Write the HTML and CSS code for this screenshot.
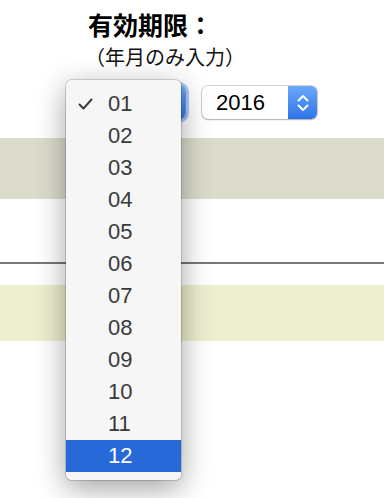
FILE: index.html
```html
<!DOCTYPE html>
<html lang="ja">
<head>
<meta charset="utf-8">
<link rel="stylesheet" href="styles.css">
</head>
<body>
<div class="page">
  <div class="form">
    <div class="title">有効期限：</div>
    <div class="note">（年月のみ入力）</div>
    <div class="selects">
      <div class="select focused">
        <span class="val">01</span>
        <span class="btn"><svg width="12" height="20" viewBox="0 0 12 20"><path d="M1.5 7.5 L6 3 L10.5 7.5 M1.5 12.5 L6 17 L10.5 12.5" fill="none" stroke="#fff" stroke-width="2" stroke-linecap="round" stroke-linejoin="round"/></svg></span>
      </div>
      <div class="select">
        <span class="val">2016</span>
        <span class="btn"><svg width="12" height="20" viewBox="0 0 12 20"><path d="M1.5 7.5 L6 3 L10.5 7.5 M1.5 12.5 L6 17 L10.5 12.5" fill="none" stroke="#fff" stroke-width="2" stroke-linecap="round" stroke-linejoin="round"/></svg></span>
      </div>
    </div>
  </div>
  <div class="band band1"></div>
  <div class="rule"></div>
  <div class="band band2"></div>

  <ul class="menu">
    <li class="item"><span class="mark"><svg width="15" height="12" viewBox="0 0 15 12"><path d="M1.5 6.5 L5.5 10.5 L13.5 1.5" fill="none" stroke="#3d3d3d" stroke-width="2" stroke-linecap="round" stroke-linejoin="round"/></svg></span>01</li>
    <li class="item"><span class="mark"></span>02</li>
    <li class="item"><span class="mark"></span>03</li>
    <li class="item"><span class="mark"></span>04</li>
    <li class="item"><span class="mark"></span>05</li>
    <li class="item"><span class="mark"></span>06</li>
    <li class="item"><span class="mark"></span>07</li>
    <li class="item"><span class="mark"></span>08</li>
    <li class="item"><span class="mark"></span>09</li>
    <li class="item"><span class="mark"></span>10</li>
    <li class="item"><span class="mark"></span>11</li>
    <li class="item hl"><span class="mark"></span>12</li>
  </ul>
</div>
</body>
</html>
```

FILE: styles.css
```css
html, body {
  margin: 0;
  padding: 0;
  background: #fff;
}
.page {
  position: relative;
  width: 384px;
  height: 498px;
  overflow: hidden;
  font-family: "Noto Sans CJK JP", sans-serif;
}
.form {
  padding-top: 7px;
}
.title {
  padding-left: 88px;
  font-size: 25px;
  font-weight: bold;
  line-height: 34px;
  color: #000;
}
.note {
  margin-top: 2px;
  padding-left: 85px;
  font-size: 20px;
  line-height: 28px;
  color: #111;
}
.selects {
  display: flex;
  gap: 17px;
  padding-left: 70px;
  margin-top: 15px;
}
.select {
  width: 115px;
  height: 33px;
  display: flex;
  background: #fff;
  border-radius: 6px;
  box-shadow: 0 0 0 1px rgba(0,0,0,0.16), 0 1px 2px rgba(0,0,0,0.18);
}
.select.focused {
  box-shadow: 0 0 0 1px rgba(30,90,200,0.5), 0 0 0 4px rgba(70,140,240,0.45);
}
.val {
  flex: 1;
  padding-left: 14px;
  font-family: "Liberation Sans", Arial, sans-serif;
  font-size: 22px;
  line-height: 33px;
  color: #000;
}
.btn {
  width: 29px;
  display: flex;
  align-items: center;
  justify-content: center;
  background: linear-gradient(#6aa9fa, #2f73ea);
  border-radius: 0 6px 6px 0;
}
.band {
  width: 100%;
}
.band1 {
  margin-top: 19px;
  height: 61px;
  background: #dcdccd;
}
.rule {
  margin-top: 63px;
  height: 2px;
  background: #777;
}
.band2 {
  margin-top: 21px;
  height: 56px;
  background: #ededcf;
}
.menu {
  position: absolute;
  left: 66px;
  top: 80px;
  width: 115px;
  margin: 0;
  padding: 8px 0;
  list-style: none;
  background: #f6f6f6;
  border-radius: 5px;
  box-shadow: 0 0 0 0.5px rgba(0,0,0,0.3), 0 8px 30px rgba(0,0,0,0.38);
}
.item {
  height: 32px;
  display: flex;
  align-items: center;
  padding-left: 12px;
  font-family: "Liberation Sans", Arial, sans-serif;
  font-size: 22px;
  color: #3a3a3a;
}
.mark {
  width: 30px;
  display: flex;
  align-items: center;
}
.item.hl {
  background: #2769d8;
  color: #fff;
}
```
